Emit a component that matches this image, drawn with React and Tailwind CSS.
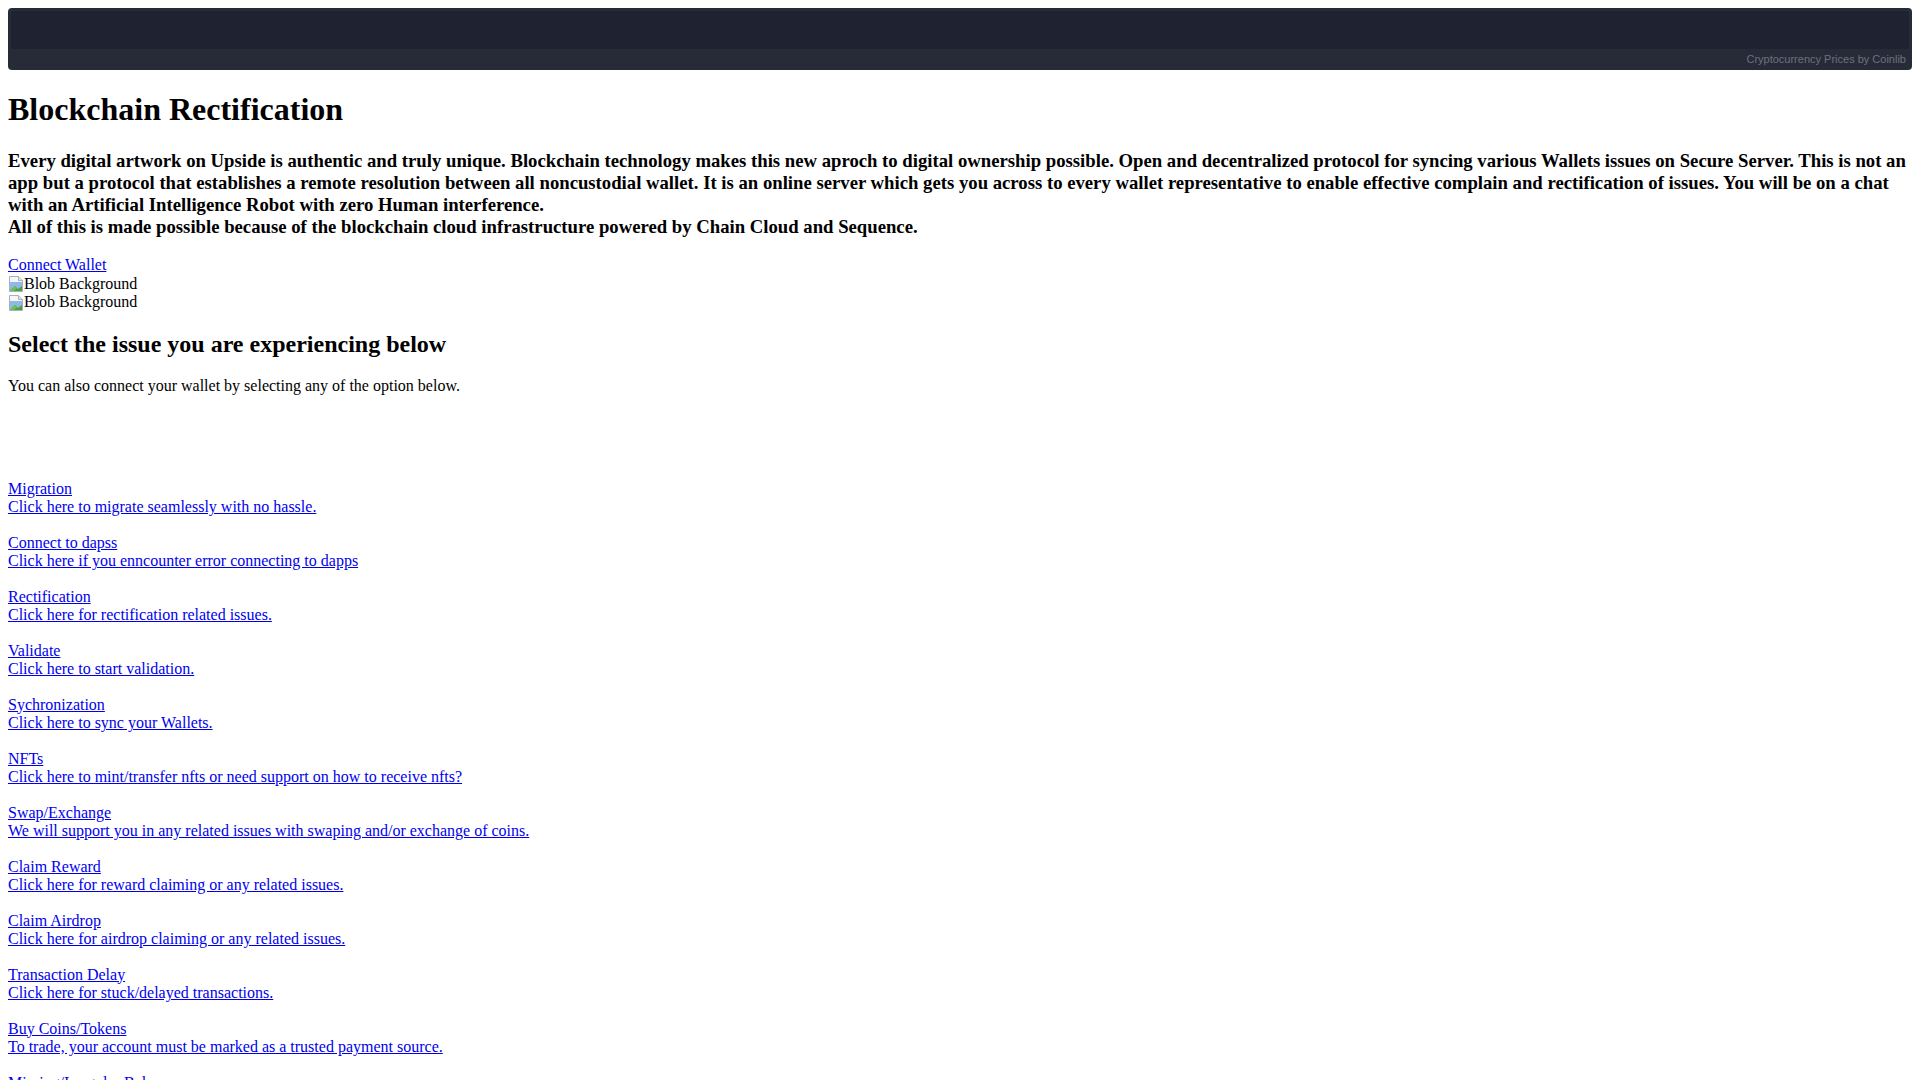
const issues = [
  ['Migration', 'Click here to migrate seamlessly with no hassle.'],
  ['Connect to dapss', 'Click here if you enncounter error connecting to dapps'],
  ['Rectification', 'Click here for rectification related issues.'],
  ['Validate', 'Click here to start validation.'],
  ['Sychronization', 'Click here to sync your Wallets.'],
  ['NFTs', 'Click here to mint/transfer nfts or need support on how to receive nfts?'],
  ['Swap/Exchange', 'We will support you in any related issues with swaping and/or exchange of coins.'],
  ['Claim Reward', 'Click here for reward claiming or any related issues.'],
  ['Claim Airdrop', 'Click here for airdrop claiming or any related issues.'],
  ['Transaction Delay', 'Click here for stuck/delayed transactions.'],
  ['Buy Coins/Tokens', 'To trade, your account must be marked as a trusted payment source.'],
  ['Missing/Irregular Balance', 'Click here to recover lost/missing funds.'],
]

// placeholder for an image that failed to load
function BrokenImage({ alt }) {
  return (
    <div className="flex items-end leading-[18.4px]">
      <svg width="16" height="16" viewBox="0 0 16 16" className="mb-[1px] shrink-0">
        <path d="M1.5 0.5h9l4 4v11h-13z" fill="#f4f6f8" stroke="#a9b1bb" />
        <path d="M10.5 0.5v4h4" fill="#dde2e7" stroke="#a9b1bb" />
        <path d="M2 6h12v9H2z" fill="#8fb7e8" />
        <path d="M2 15l5-5 3 3 4-3v5z" fill="#4aa33a" />
        <path d="M2 15l5-5 2 2-3 3z" fill="#6cc04f" />
      </svg>
      <span>{alt}</span>
    </div>
  )
}

export default function App() {
  return (
    <div className="min-h-screen bg-white p-2 text-black text-[16px] leading-[18.4px] [font-family:'Liberation_Serif',serif]">
      {/* price ticker widget */}
      <div className="h-[62px] rounded-[4px] bg-[#262b37] flex flex-col overflow-hidden">
        <div className="mx-[3px] mt-[3px] h-[38px] rounded-t-[3px] bg-[#1f2331]" />
        <div className="flex-1 flex items-center justify-end pr-[6px]">
          <span className="text-[11px] text-[#6b7181] [font-family:'Liberation_Sans',Arial,sans-serif]">
            Cryptocurrency Prices by Coinlib
          </span>
        </div>
      </div>

      <h1 className="mt-[21.44px] text-[32px] leading-[36.8px] font-bold">Blockchain Rectification</h1>

      <h3 className="mt-[21.5px] text-[18.72px] leading-[22px] font-bold">
        Every digital artwork on Upside is authentic and truly unique. Blockchain technology makes this new aproch to digital ownership possible. Open and decentralized protocol for syncing various Wallets issues on Secure Server. This is not an app but a protocol that establishes a remote resolution between all noncustodial wallet. It is an online server which gets you across to every wallet representative to enable effective complain and rectification of issues. You will be on a chat with an Artificial Intelligence Robot with zero Human interference.
        <br />
        All of this is made possible because of the blockchain cloud infrastructure powered by Chain Cloud and Sequence.
      </h3>

      <div className="mt-[18.72px]">
        <a href="#" className="text-[#0000ee] underline">Connect Wallet</a>
      </div>
      <BrokenImage alt="Blob Background" />
      <BrokenImage alt="Blob Background" />

      <h2 className="mt-[18.92px] text-[24px] leading-[27.6px] font-bold">Select the issue you are experiencing below</h2>
      <p className="mt-[18.5px]">You can also connect your wallet by selecting any of the option below.</p>

      <div className="mt-[84.5px] flex flex-col gap-[17.2px]">
        {issues.map(([title, text]) => (
          <a key={title} href="#" className="block text-[#0000ee] underline">
            {title}
            <br />
            {text}
          </a>
        ))}
      </div>
    </div>
  )
}
